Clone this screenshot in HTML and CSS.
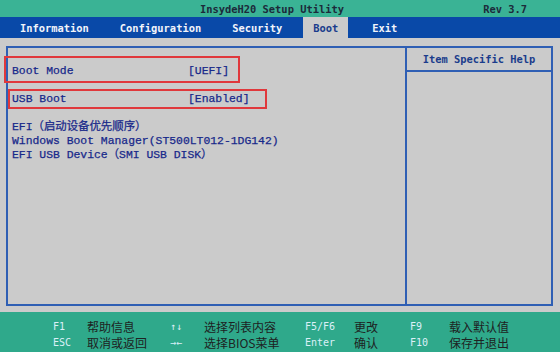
FILE: index.html
```html
<!DOCTYPE html>
<html lang="zh-CN">

<head>
    <meta charset="UTF-8">
    <meta name="viewport" content="width=device-width, initial-scale=1.0">
    <title>InsydeH20 Setup Utility</title>
    <link rel="stylesheet" href="styles.css">
</head>

<body>
    <header class="titlebar">
        <span></span>
        <span class="title">InsydeH20 Setup Utility</span>
        <span class="rev">Rev 3.7</span>
    </header>

    <nav class="tabs">
        <a class="tab">Information</a>
        <a class="tab">Configuration</a>
        <a class="tab">Security</a>
        <a class="tab active">Boot</a>
        <a class="tab exit">Exit</a>
    </nav>

    <main class="panel">
        <section class="items">
            <div class="row"><span class="label">Boot Mode</span><span class="value">[UEFI]</span></div>
            <div class="row"></div>
            <div class="row"><span class="label">USB Boot</span><span class="value">[Enabled]</span></div>
            <div class="row"></div>
            <div class="row">EFI（启动设备优先顺序）</div>
            <div class="row">Windows Boot Manager(ST500LT012-1DG142)</div>
            <div class="row">EFI USB Device（SMI USB DISK）</div>

            <!-- red annotation boxes -->
            <span class="mark mark-mode"></span>
            <span class="mark mark-usb"></span>
        </section>

        <aside class="help">
            <h2>Item Specific Help</h2>
        </aside>
    </main>

    <footer class="keys">
        <span class="key">F1</span><span class="desc">帮助信息</span>
        <span class="key">↑↓</span><span class="desc">选择列表内容</span>
        <span class="key">F5/F6</span><span class="desc">更改</span>
        <span class="key">F9</span><span class="desc">载入默认值</span>

        <span class="key">ESC</span><span class="desc">取消或返回</span>
        <span class="key">→←</span><span class="desc">选择BIOS菜单</span>
        <span class="key">Enter</span><span class="desc">确认</span>
        <span class="key">F10</span><span class="desc">保存并退出</span>
    </footer>
</body>
</html>
```

FILE: styles.css
```css
body {
    margin: 0;
    width: 560px;
    height: 352px;
    background-color: #cbcbcb;
    font-family: 'DejaVu Sans Mono', monospace;
    display: flex;
    flex-direction: column;
    overflow: hidden;
}

.titlebar {
    height: 17px;
    background-color: #3ab395;
    display: grid;
    grid-template-columns: 1fr auto 1fr;
    align-items: center;
    font-size: 10.4px;
    font-weight: bold;
    color: #1c2a3a;
}

.titlebar .title {
    margin-right: 16px;
}

.titlebar .rev {
    justify-self: end;
    padding-right: 33px;
}

.tabs {
    height: 21px;
    background-color: #0949a8;
    display: flex;
    gap: 11px;
    padding-left: 10px;
}

.tab {
    padding: 0 10px;
    display: flex;
    align-items: center;
    color: #f2f4fa;
    font-size: 10.4px;
    font-weight: bold;
}

.tab.active {
    background-color: #cbcbcb;
    color: #1a3c8c;
}

.tab.exit {
    margin-left: 3px;
}

.panel {
    margin: 8px 0 0 6px;
    width: 547px;
    height: 260px;
    box-sizing: border-box;
    border: 2px solid #2f5fb4;
    display: grid;
    grid-template-columns: 397px 1fr;
}

.items {
    position: relative;
    padding: 16px 0 0 4px;
    font-family: 'Liberation Mono', 'Noto Sans CJK SC', monospace;
    font-size: 11.4px;
    line-height: 14px;
    color: #17288a;
    -webkit-text-stroke: 0.25px #17288a;
}

.row {
    height: 14px;
    display: flex;
    white-space: nowrap;
}

.row .label {
    width: 176px;
}

.mark {
    position: absolute;
    border: 2px solid #e0383c;
}

.mark-mode {
    left: -4px;
    top: 8px;
    width: 232px;
    height: 23px;
}

.mark-usb {
    left: 0;
    top: 41px;
    width: 255px;
    height: 16px;
}

.help {
    border-left: 2px solid #2f5fb4;
}

.help h2 {
    margin: 0;
    height: 22px;
    border-bottom: 2px solid #2f5fb4;
    display: flex;
    align-items: center;
    justify-content: center;
    font-size: 10.4px;
    font-weight: bold;
    color: #1a3c8c;
}

.keys {
    margin-top: auto;
    height: 40px;
    box-sizing: border-box;
    background-color: #2fa98b;
    padding: 6px 0 0 53px;
    display: grid;
    grid-template-columns: 34px 83px 34px 101px 49px 56px 39px 1fr;
    grid-auto-rows: 16px;
    align-items: center;
}

.key {
    font-family: 'DejaVu Sans Mono', monospace;
    font-size: 10px;
    color: #dcf0f8;
}

.desc {
    font-family: 'Noto Sans CJK SC', sans-serif;
    font-size: 12px;
    color: #1e2222;
}
```
